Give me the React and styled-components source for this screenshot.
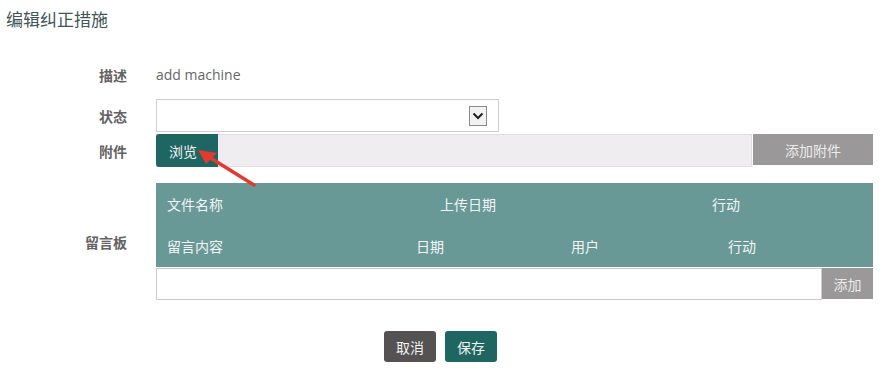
import React from "react";
import styled, { createGlobalStyle } from "styled-components";

const CJK = `"Noto Sans CJK SC", "Open Sans", sans-serif`;

const GlobalStyle = createGlobalStyle`
  html, body {
    margin: 0;
    padding: 0;
    background: #ffffff;
    font-family: ${CJK};
  }
`;

const App = () => {
  return (
    <>
      <GlobalStyle />
      <StyledPage>
        <StyledTitle>编辑纠正措施</StyledTitle>
        <StyledForm>
          <StyledRow $top={33}>
            <StyledLabel>描述</StyledLabel>
            <StyledValue>add machine</StyledValue>
          </StyledRow>

          <StyledRow $top={12}>
            <StyledLabel>状态</StyledLabel>
            <StyledSelect>
              <StyledSelectArrow>
                <svg width="12" height="8" viewBox="0 0 12 8">
                  <path d="M1.5 1.5 L6 6 L10.5 1.5" fill="none" stroke="#222" strokeWidth="2" />
                </svg>
              </StyledSelectArrow>
            </StyledSelect>
          </StyledRow>

          <StyledRow $top={2}>
            <StyledLabel>附件</StyledLabel>
            <StyledFileRow>
              <StyledFileField>
                <StyledBrowseButton>浏览</StyledBrowseButton>
              </StyledFileField>
              <StyledGrayButton $width={120} $height={31}>添加附件</StyledGrayButton>
            </StyledFileRow>
          </StyledRow>

          <StyledRow $top={16}>
            <StyledLabel>留言板</StyledLabel>
            <div>
              <StyledTableHead>
                <StyledHeadRow $columns="273px 272px 1fr">
                  <span>文件名称</span>
                  <span>上传日期</span>
                  <span>行动</span>
                </StyledHeadRow>
                <StyledHeadRow $columns="249px 155px 157px 1fr">
                  <span>留言内容</span>
                  <span>日期</span>
                  <span>用户</span>
                  <span>行动</span>
                </StyledHeadRow>
              </StyledTableHead>
              <StyledCommentRow>
                <StyledCommentInput />
                <StyledGrayButton $width={51} $height={31}>添加</StyledGrayButton>
              </StyledCommentRow>
            </div>
          </StyledRow>
        </StyledForm>

        <StyledActions>
          <StyledActionButton $bg="#545252">取消</StyledActionButton>
          <StyledActionButton $bg="#1f6663">保存</StyledActionButton>
        </StyledActions>

        <StyledArrow width="70" height="44" viewBox="0 0 70 44">
          <path d="M62 40 L17 12" stroke="#e23a30" strokeWidth="3.5" strokeLinecap="round" />
          <path d="M6 5 L25 8 L14 19 Z" fill="#e23a30" />
        </StyledArrow>
      </StyledPage>
    </>
  );
};

export default App;

const StyledPage = styled.div`
  position: relative;
  width: 892px;
  height: 377px;
  overflow: hidden;
  padding-top: 7px;
  box-sizing: border-box;
`;

const StyledTitle = styled.h1`
  margin: 0 0 0 6px;
  font-size: 17px;
  font-weight: 400;
  line-height: 23px;
  color: #40555a;
`;

const StyledForm = styled.div`
  display: flex;
  flex-direction: column;
  padding-right: 19px;
`;

const StyledRow = styled.div`
  display: grid;
  grid-template-columns: 127px 1fr;
  column-gap: 29px;
  align-items: center;
  margin-top: ${(p) => p.$top}px;
`;

const StyledLabel = styled.div`
  text-align: right;
  font-size: 14px;
  font-weight: 700;
  color: #636363;
`;

const StyledValue = styled.div`
  font-family: "Open Sans", ${CJK};
  font-size: 14px;
  line-height: 24px;
  color: #666;
`;

const StyledSelect = styled.div`
  width: 343px;
  height: 33px;
  box-sizing: border-box;
  border: 1px solid #cfcfcf;
  background: #fff;
  display: flex;
  align-items: center;
  justify-content: flex-end;
  padding-right: 11px;
`;

const StyledSelectArrow = styled.div`
  width: 18px;
  height: 20px;
  box-sizing: border-box;
  border: 1px solid #8a8a8a;
  background: #f2f2f2;
  display: flex;
  align-items: center;
  justify-content: center;
`;

const StyledFileRow = styled.div`
  display: flex;
  align-items: flex-start;
  gap: 1px;
`;

const StyledFileField = styled.div`
  flex: 1;
  height: 33px;
  box-sizing: border-box;
  background: #efedef;
  border: 1px solid #e0dee0;
  border-left: none;
  display: flex;
`;

const StyledBrowseButton = styled.div`
  width: 62px;
  height: 33px;
  margin-top: -1px;
  border-radius: 3px 0 0 3px;
  background: #1f6663;
  color: #f4f4f4;
  font-size: 14px;
  display: flex;
  align-items: center;
  justify-content: center;
  box-sizing: border-box;
  padding-right: 8px;
`;

const StyledGrayButton = styled.div`
  width: ${(p) => p.$width}px;
  height: ${(p) => p.$height}px;
  background: #9a9898;
  color: #ececec;
  font-size: 14px;
  display: flex;
  align-items: center;
  justify-content: center;
`;

const StyledTableHead = styled.div`
  background: #689997;
  color: #f3f5f5;
  font-size: 14px;
`;

const StyledHeadRow = styled.div`
  display: grid;
  grid-template-columns: ${(p) => p.$columns};
  align-items: center;
  height: 42px;
  padding-left: 11px;
`;

const StyledCommentRow = styled.div`
  display: flex;
  align-items: flex-start;
  margin-top: 1px;
`;

const StyledCommentInput = styled.div`
  flex: 1;
  height: 32px;
  box-sizing: border-box;
  border: 1px solid #cccccc;
  background: #fff;
`;

const StyledActions = styled.div`
  display: flex;
  gap: 9px;
  margin: 31px 0 0 384px;
`;

const StyledActionButton = styled.div`
  width: 52px;
  height: 31px;
  border-radius: 3px;
  background: ${(p) => p.$bg};
  color: #f2f2f2;
  font-size: 14px;
  display: flex;
  align-items: center;
  justify-content: center;
`;

const StyledArrow = styled.svg`
  position: absolute;
  left: 192px;
  top: 145px;
`;
